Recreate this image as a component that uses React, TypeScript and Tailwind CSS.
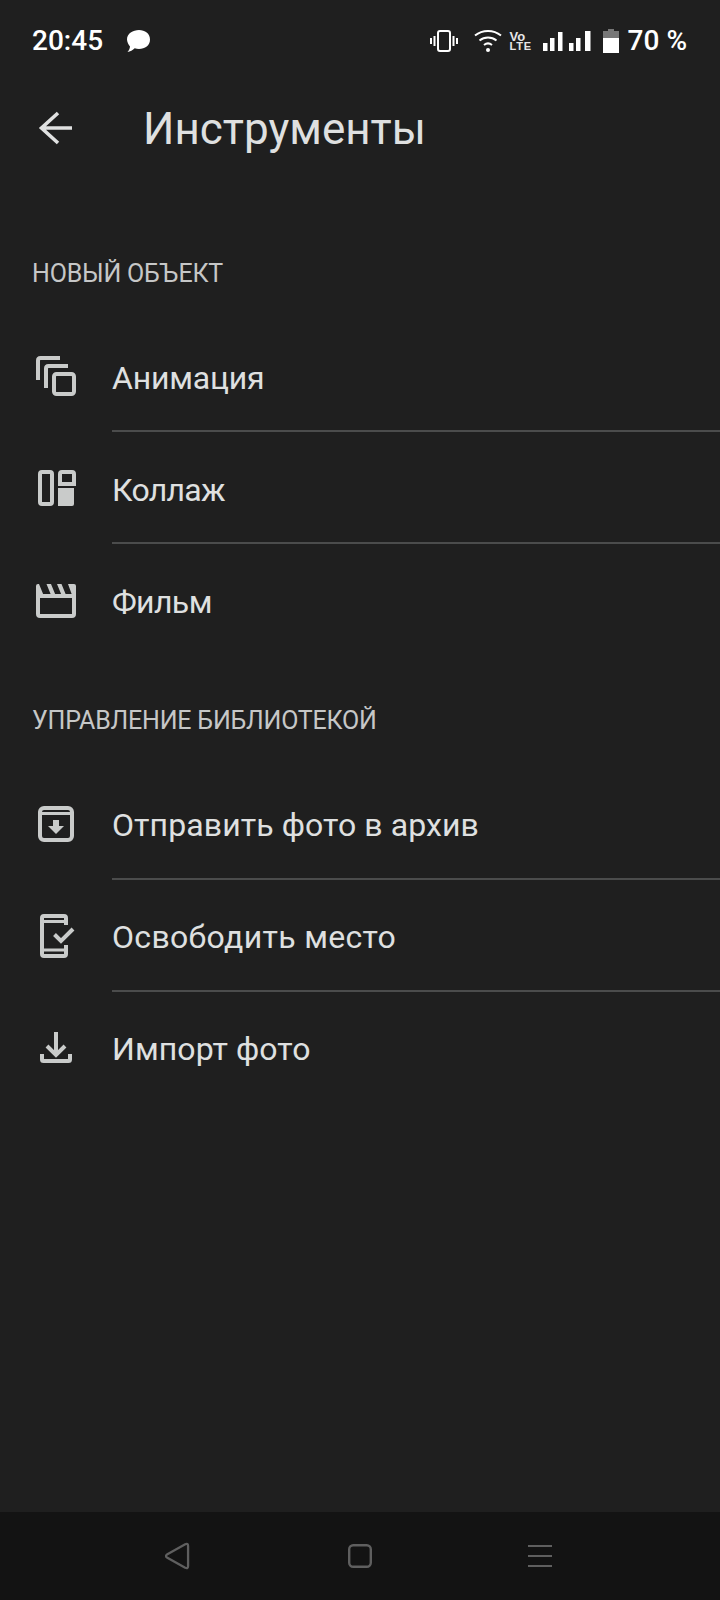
import React from "react";

const Ico = ({ children }: { children: React.ReactNode }) => (
  <svg width="48" height="48" viewBox="0 0 48 48" fill="none" stroke="#c9cbca" strokeWidth="4" className="shrink-0">
    {children}
  </svg>
);

const icons: Record<string, React.ReactNode> = {
  anim: (
    <Ico>
      <path d="M6 26V6.500Q6 4 8.500 4H28" />
      <path d="M14 34V14.500Q14 12 16.500 12H36" />
      <rect x="22" y="20" width="20" height="20" rx="2.500" />
    </Ico>
  ),
  collage: (
    <Ico>
      <rect x="8" y="6" width="12" height="32" rx="2" />
      <path d="M28 8q0-2 2-2h10q2 0 2 2v10H28z" />
      <path d="M26 22h16v16q0 2-2 2H26z" fill="#c9cbca" stroke="none" />
    </Ico>
  ),
  film: (
    <Ico>
      <path d="M6 18h36v18q0 2-2 2H8q-2 0-2-2z" />
      <path d="M4 18V8q0-2 2-2h1l4.500 11zM14.500 6h4.500l4.500 11H19zM25 6h4.500L34 17h-4.500zM36 6h6q2 0 2 2v9h-4z" fill="#c9cbca" stroke="none" />
    </Ico>
  ),
  archive: (
    <Ico>
      <rect x="8" y="7" width="32" height="32" rx="4" />
      <path d="M8 12.500h32" strokeWidth="3" />
      <path d="M21 19h6v6h5l-8 8-8-8h5z" fill="#c9cbca" stroke="none" />
    </Ico>
  ),
  phone: (
    <Ico>
      <path d="M34 12V5q0-2-2-2H12q-2 0-2 2v36q0 2 2 2h20q2 0 2-2v-9" />
      <path d="M10 8.500h24M10 37h24" strokeWidth="3" />
      <path d="M22.500 21.500l6.500 6.500L41 16" strokeWidth="4" />
    </Ico>
  ),
  imp: (
    <Ico>
      <path d="M24 7v22M15 21l9 9 9-9" />
      <path d="M10 29v5.500q0 1.500 1.500 1.500h25q1.500 0 1.500-1.500V29" />
    </Ico>
  ),
};

const Row = ({
  icon,
  label,
  divider,
  late,
  track,
}: {
  icon: string;
  label: string;
  divider?: boolean;
  late?: boolean;
  track: string;
}) => (
  <div className="flex h-[112px] flex-col">
    <div className={late ? "flex h-[109px] items-center pl-[32px] pt-[3px]" : "flex h-[108px] items-center pl-[32px] pt-[4px]"}>
      {icons[icon]}
      <span className={"ml-[32px] text-[32px] leading-[40px] text-[#dfe0e0] " + track}>{label}</span>
    </div>
    {divider && <div className="ml-[112px] h-[2px] bg-[#4b4c4c]" />}
  </div>
);

const Heading = ({ children }: { children: React.ReactNode }) => (
  <div className="px-[32px] text-[25px] leading-[32px] tracking-[-0.2px] text-[#c6c7c7]">{children}</div>
);

const StatusIcons = () => (
  <div className="ml-auto flex items-center">
    <svg width="28" height="22" viewBox="0 0 28 22" fill="none" stroke="#fff" strokeWidth="2">
      <rect x="8" y="1" width="12" height="20" rx="2" />
      <path d="M4.500 6v10M1 8v6M23.500 6v10M27 8v6" />
    </svg>
    <svg className="ml-[16px]" width="28" height="24" viewBox="0 0 28 24" fill="none" stroke="#fff" strokeWidth="2">
      <path d="M1 6.500C8.500 0.500 19.500 0.500 27 6.500M5.500 11.500C10.500 7.500 17.500 7.500 22.500 11.500M10 16C12.500 14 15.500 14 18 16" />
      <circle cx="14" cy="21" r="2" fill="#fff" stroke="none" />
    </svg>
    <div className="ml-[8px] flex w-[23px] flex-col font-['Liberation_Sans',sans-serif] font-bold text-[#e6e6e6]">
      <span className="h-[10px] text-[13px] leading-[10px]">Vo</span>
      <span className="h-[9px] text-[11px] leading-[9px] tracking-[0.8px]">LTE</span>
    </div>
    <svg className="ml-[10px]" width="48" height="20" viewBox="0 0 48 20" fill="#fff">
      <path d="M0 12h4.500v8H0zM7 7h4.500v13H7zM15 1h4.500v19H15zM26 12h4.500v8H26zM33 7h4.500v13H33zM42 0h5.500v20H42z" />
    </svg>
    <svg className="ml-[12px]" width="16" height="24" viewBox="0 0 16 24">
      <path d="M5 0h6v2h5v7H0V2h5z" fill="#777" />
      <path d="M0 9h16v15H0z" fill="#fff" />
    </svg>
    <span className="ml-[9px] text-[28px] font-medium leading-[34px] text-white">70 %</span>
  </div>
);

export default function App() {
  return (
    <div className="flex h-[1600px] w-[720px] flex-col overflow-hidden bg-[#1f1f1f] font-['Roboto',sans-serif]">
      <div className="flex h-[82px] items-center pl-[32px] pr-[33px]">
        <span className="text-[28px] font-medium leading-[34px] text-white">20:45</span>
        <svg className="ml-[23px]" width="24" height="24" viewBox="0 0 24 24" fill="#fff">
          <path d="M13 1c6 0 11 3.500 11 9.500S19 20 13 20c-1.500 0-3-.2-4.300-.7C7 21 4 23 1.500 23 3 21.500 3.800 19.500 4 17.500 2.500 15.500 1 13 1 10.500 1 4.500 7 1 13 1z" />
        </svg>
        <StatusIcons />
      </div>
      <div className="flex h-[92px] items-center">
        <svg className="ml-[33px]" width="48" height="48" viewBox="0 0 48 48" fill="none" stroke="#e0e1e1" strokeWidth="3.600">
          <path d="M39 24H8.500M25 9L8.500 24 25 39" />
        </svg>
        <span className="ml-[62px] pt-[2px] text-[44px] leading-[56px] text-[#dfe0e0]">Инструменты</span>
      </div>
      <div className="mt-[84px]">
        <Heading>НОВЫЙ ОБЪЕКТ</Heading>
      </div>
      <div className="mt-[32px]">
        <Row icon="anim" label="Анимация" divider track="tracking-[-0.2px]" />
        <Row icon="collage" label="Коллаж" divider track="tracking-[-0.7px]" />
        <Row icon="film" label="Фильм" track="tracking-[-0.6px]" />
      </div>
      <div className="mt-[47px]">
        <Heading>УПРАВЛЕНИЕ БИБЛИОТЕКОЙ</Heading>
      </div>
      <div className="mt-[32px]">
        <Row icon="archive" label="Отправить фото в архив" divider late track="tracking-[0.1px]" />
        <Row icon="phone" label="Освободить место" divider late track="tracking-[0.32px]" />
        <Row icon="imp" label="Импорт фото" late track="tracking-[0.1px]" />
      </div>
      <div className="flex-1" />
      <div className="flex h-[88px] items-center bg-[#131313] pl-[165px]">
        <svg width="25" height="28" viewBox="0 0 26 28" fill="none" stroke="#5f5f5f" strokeWidth="2.400">
          <path d="M2 12.500L21 1.800q3-1.300 3 1.700v21q0 3-3 1.700L2 15.500q-2-1.500 0-3z" />
        </svg>
        <svg className="ml-[158px]" width="24" height="24" viewBox="0 0 24 24" fill="none" stroke="#5f5f5f" strokeWidth="2.400">
          <rect x="1.200" y="1.200" width="21.600" height="21.600" rx="4" />
        </svg>
        <svg className="ml-[156px]" width="24" height="24" viewBox="0 0 24 24" fill="none" stroke="#5f5f5f" strokeWidth="2">
          <path d="M0 2h24M0 12h24M0 22h24" />
        </svg>
      </div>
    </div>
  );
}
